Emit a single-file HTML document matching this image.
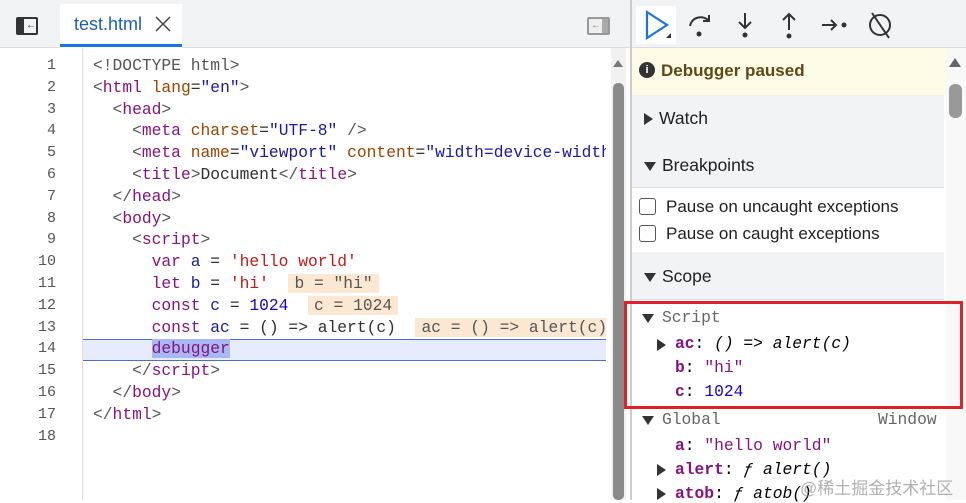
<!DOCTYPE html>
<html><head><style>
*{margin:0;padding:0;box-sizing:border-box}
body{width:966px;height:500px;overflow:hidden;background:#fff;font-family:"Liberation Sans",sans-serif;position:relative}
.abs{position:absolute}
.code{font-family:"Liberation Mono",monospace;font-size:16.3px;white-space:pre;color:#303030}
.ln{position:absolute;left:0;width:56px;text-align:right;font-family:"Liberation Mono",monospace;font-size:15px;color:#555}
.t{color:#881280}.at{color:#994500}.v{color:#1a1aa6}.g{color:#555}.s{color:#c41a16}.n{color:#1c00cf}.k{color:#881280}.vr{color:#1a1aa6}
.iv{background:#fce8d2;color:#555;padding:0 6px}
.hdr{position:absolute;left:632px;width:312px;background:#f1f3f4;font-size:17.5px;color:#202124}
.tri{display:inline-block;width:0;height:0;border-style:solid;margin-right:6px;vertical-align:middle}
.tr{border-width:6px 0 6px 9px;border-color:transparent transparent transparent #333}
.td{border-width:9px 6px 0 6px;border-color:#333 transparent transparent transparent}
.sc{font-family:"Liberation Mono",monospace;font-size:16.3px;white-space:pre;position:absolute}
.key{color:#881280;font-weight:bold}
</style></head><body>
<div class="abs" style="left:0;top:0;width:966px;height:48px;background:#f1f3f4;border-bottom:1px solid #ddd"></div>
<div class="abs" style="left:60px;top:4px;width:122px;height:44px;background:#fff"></div>
<div class="abs" style="left:60px;top:44px;width:122px;height:3px;background:#1a73e8"></div>
<div class="abs" style="left:74px;top:14px;font-size:18px;color:#1a5fb4">test.html</div>
<svg class="abs" style="left:155px;top:16px" width="16" height="16"><path d="M1 1 L15 15 M15 1 L1 15" stroke="#444" stroke-width="1.5"/></svg>
<div class="abs" style="left:16px;top:17px;width:22px;height:18px;border:2px solid #333;border-radius:2px"><div style="position:absolute;left:0;top:0;width:6px;height:14px;background:#333"></div><div style="position:absolute;left:8px;top:2px;font-size:10px;line-height:10px;color:#333">←</div></div>
<div class="abs" style="left:587px;top:17px;width:23px;height:18px;border:2px solid #999;border-radius:2px;background:#eee"><div style="position:absolute;right:0;top:0;width:6px;height:14px;background:#aaa"></div><div style="position:absolute;left:2px;top:2px;font-size:10px;line-height:10px;color:#888">←</div></div>
<div class="abs" style="left:630px;top:0;width:2px;height:500px;background:#ccc"></div>
<div class="abs" style="left:636px;top:6px;width:40px;height:38px;background:#fff"></div>
<svg class="abs" style="left:640px;top:8px" width="300" height="34" viewBox="0 0 300 34">
<path d="M7 4 L27 17 L7 30 Z" fill="none" stroke="#1a73e8" stroke-width="2.2"/><path d="M26 30 L31 30 L31 25Z" fill="#333"/>
<path d="M50 18 C52 8 64 7 69 13 M69 7 L69 13 L63 13" fill="none" stroke="#333" stroke-width="2"/><circle cx="59" cy="26" r="2.5" fill="#333"/>
<path d="M105 5 V20 M99 14 L105 20 L111 14" fill="none" stroke="#333" stroke-width="2"/><circle cx="105" cy="27" r="2.5" fill="#333"/>
<path d="M149 22 V6 M143 12 L149 6 L155 12" fill="none" stroke="#333" stroke-width="2"/><circle cx="149" cy="28" r="2.5" fill="#333"/>
<path d="M182 17 H196 M191 12 L196 17 L191 22" fill="none" stroke="#333" stroke-width="2"/><circle cx="204" cy="17" r="2.5" fill="#333"/>
<circle cx="240" cy="17" r="10" fill="none" stroke="#333" stroke-width="2"/><path d="M232 5 L249 30" stroke="#333" stroke-width="2"/>
</svg>
<div class="abs" style="left:82px;top:48px;width:1px;height:452px;background:#ddd"></div>
<div class="abs" style="left:83px;top:339px;width:523px;height:22px;background:#e6ecfb;border-top:1px solid #4a6fd0;border-bottom:1px solid #4a6fd0"></div>
<div class="abs" style="left:611px;top:48px;width:15px;height:452px;background:#f1f1f1"></div>
<div class="abs" style="left:613px;top:83px;width:11px;height:417px;background:#8a8a8a;border-radius:5px"></div>
<div class="abs" style="left:613px;top:60px;width:0;height:0;border:5px solid transparent;border-bottom:7px solid #777;border-top:0"></div>
<div class="abs" style="left:0;top:57px;width:606px;height:440px;overflow:hidden">
<div class="ln" style="top:0">1</div><div class="ln" style="top:22px">2</div><div class="ln" style="top:43.6px">3</div><div class="ln" style="top:65.4px">4</div><div class="ln" style="top:87.2px">5</div><div class="ln" style="top:109px">6</div><div class="ln" style="top:130.8px">7</div><div class="ln" style="top:152.6px">8</div><div class="ln" style="top:174.4px">9</div><div class="ln" style="top:196.2px">10</div><div class="ln" style="top:218px">11</div><div class="ln" style="top:239.8px">12</div><div class="ln" style="top:261.6px">13</div><div class="ln" style="top:283.4px">14</div><div class="ln" style="top:305.2px">15</div><div class="ln" style="top:327px">16</div><div class="ln" style="top:348.8px">17</div><div class="ln" style="top:370.6px">18</div>
</div>
<div class="abs" style="left:83px;top:54px;width:523px;height:440px;overflow:hidden">
<div class="code abs" style="left:10px;top:1px;line-height:21.8px"><span class="g">&lt;!DOCTYPE html&gt;</span>
<span class="g">&lt;</span><span class="t">html</span> <span class="at">lang</span>=<span class="v">"en"</span><span class="g">&gt;</span>
  <span class="g">&lt;</span><span class="t">head</span><span class="g">&gt;</span>
    <span class="g">&lt;</span><span class="t">meta</span> <span class="at">charset</span>=<span class="v">"UTF-8"</span> <span class="g">/&gt;</span>
    <span class="g">&lt;</span><span class="t">meta</span> <span class="at">name</span>=<span class="v">"viewport"</span> <span class="at">content</span>=<span class="v">"width=device-width, initial-scale=1.0"</span> <span class="g">/&gt;</span>
    <span class="g">&lt;</span><span class="t">title</span><span class="g">&gt;</span>Document<span class="g">&lt;/</span><span class="t">title</span><span class="g">&gt;</span>
  <span class="g">&lt;/</span><span class="t">head</span><span class="g">&gt;</span>
  <span class="g">&lt;</span><span class="t">body</span><span class="g">&gt;</span>
    <span class="g">&lt;</span><span class="t">script</span><span class="g">&gt;</span>
      <span class="k">var</span> <span class="vr">a</span> = <span class="s">'hello world'</span>
      <span class="k">let</span> <span class="vr">b</span> = <span class="s">'hi'</span>  <span class="iv">b = "hi"</span>
      <span class="k">const</span> <span class="vr">c</span> = <span class="n">1024</span>  <span class="iv">c = 1024</span>
      <span class="k">const</span> <span class="vr">ac</span> = () =&gt; alert(c)  <span class="iv">ac = () =&gt; alert(c)</span>
      <span class="k" style="background:#a7b8f2">debugger</span>
    <span class="g">&lt;/</span><span class="t">script</span><span class="g">&gt;</span>
  <span class="g">&lt;/</span><span class="t">body</span><span class="g">&gt;</span>
<span class="g">&lt;/</span><span class="t">html</span><span class="g">&gt;</span>
</div></div>
<div class="abs" style="left:632px;top:48px;width:314px;height:47px;background:#fefbe6"></div>
<div class="abs" style="left:639px;top:62px;width:16px;height:16px;border-radius:50%;background:#333;color:#fff;font-size:11px;font-weight:bold;text-align:center;line-height:16px">i</div>
<div class="abs" style="left:661px;top:61px;font-size:17px;font-weight:bold;color:#5c4a17">Debugger paused</div>
<div class="hdr" style="top:95px;height:47px;padding:13px 0 0 12px"><span class="tri tr"></span>Watch</div>
<div class="hdr" style="top:142px;height:46px;padding:13px 0 0 12px;border-bottom:1px solid #dde"><span class="tri td"></span>Breakpoints</div>
<div class="abs" style="left:639px;top:198px;width:17px;height:17px;border:1.5px solid #555;border-radius:3px"></div>
<div class="abs" style="left:666px;top:197px;font-size:17px;color:#202124">Pause on uncaught exceptions</div>
<div class="abs" style="left:639px;top:225px;width:17px;height:17px;border:1.5px solid #555;border-radius:3px"></div>
<div class="abs" style="left:666px;top:224px;font-size:17px;color:#202124">Pause on caught exceptions</div>
<div class="hdr" style="top:252px;height:48px;padding:14px 0 0 12px;border-bottom:1px solid #dde"><span class="tri td"></span>Scope</div>
<div class="abs" style="left:946px;top:48px;width:20px;height:452px;background:#f8f8f8"></div>
<div class="abs" style="left:949px;top:58px;width:0;height:0;border:6px solid transparent;border-bottom:9px solid #666;border-top:0"></div>
<div class="abs" style="left:949px;top:84px;width:13px;height:34px;background:#999;border-radius:6px"></div>
<div class="abs" style="left:624px;top:301px;width:339px;height:108px;border:3px solid #e0202a"></div>
<span class="tri td abs" style="left:642px;top:314px"></span><div class="sc" style="left:662px;top:308px;color:#666">Script</div>
<span class="tri tr abs" style="left:657px;top:339px"></span><div class="sc" style="left:675px;top:334px"><span class="key">ac</span>: <i>() =&gt; alert(c)</i></div>
<div class="sc" style="left:675px;top:358px"><span class="key">b</span>: <span style="color:#881280">"hi"</span></div>
<div class="sc" style="left:675px;top:382px"><span class="key">c</span>: <span class="n">1024</span></div>
<span class="tri td abs" style="left:642px;top:416px"></span><div class="sc" style="left:662px;top:410px;color:#666">Global</div>
<div class="sc" style="left:878px;top:410px;color:#666">Window</div>
<div class="sc" style="left:675px;top:436px"><span class="key">a</span>: <span style="color:#881280">"hello world"</span></div>
<span class="tri tr abs" style="left:657px;top:464px"></span><div class="sc" style="left:675px;top:460px"><span class="key">alert</span>: <i>ƒ alert()</i></div>
<span class="tri tr abs" style="left:657px;top:488px"></span><div class="sc" style="left:675px;top:484px"><span class="key">atob</span>: <i>ƒ atob()</i></div>
<div class="abs" style="left:800px;top:474px;font-size:17px;color:rgba(150,150,150,.75);font-family:'Liberation Sans','Noto Sans CJK SC',sans-serif">@稀土掘金技术社区</div>
</body></html>
